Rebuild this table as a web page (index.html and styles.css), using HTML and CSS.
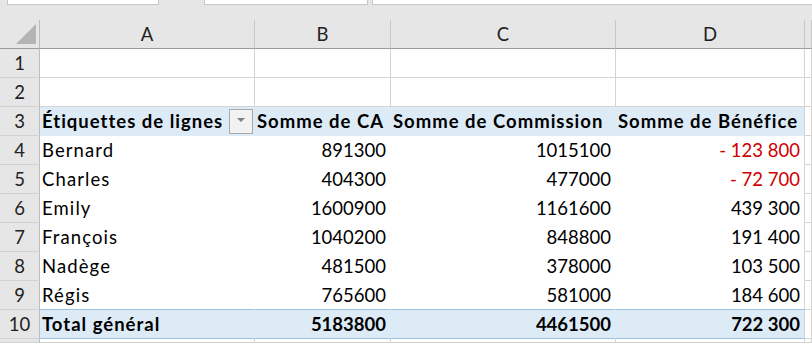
FILE: index.html
```html
<!DOCTYPE html>
<html lang="fr">
  <head>
    <meta charset="UTF-8" />
    <title>Tableau croisé dynamique</title>
    <link rel="stylesheet" href="styles.css">
  </head>
  <body>
    <div class="topbar">
      <span class="box box_name"></span>
      <span class="box box_tools"></span>
      <span class="box box_formula"></span>
    </div>

    <div class="sheet">
      <!-- en-têtes de colonnes -->
      <div class="corner"><span class="corner_tri"></span></div>
      <div class="colhead">A</div>
      <div class="colhead">B</div>
      <div class="colhead">C</div>
      <div class="colhead">D</div>
      <div class="colhead"></div>

      <div class="rowhead">1</div>
      <div class="cell"></div><div class="cell"></div><div class="cell"></div><div class="cell"></div><div class="cell"></div>

      <div class="rowhead">2</div>
      <div class="cell"></div><div class="cell"></div><div class="cell"></div><div class="cell"></div><div class="cell"></div>

      <!-- tableau croisé -->
      <div class="rowhead">3</div>
      <div class="cell pv_head first label">Étiquettes de lignes<span class="dd"></span></div>
      <div class="cell pv_head label">Somme de CA</div>
      <div class="cell pv_head label">Somme de Commission</div>
      <div class="cell pv_head label last">Somme de Bénéfice</div>
      <div class="cell"></div>

      <div class="rowhead">4</div>
      <div class="cell pv first label">Bernard</div>
      <div class="cell pv num">891300</div>
      <div class="cell pv num">1015100</div>
      <div class="cell pv num last neg">- 123 800</div>
      <div class="cell"></div>

      <div class="rowhead">5</div>
      <div class="cell pv first label">Charles</div>
      <div class="cell pv num">404300</div>
      <div class="cell pv num">477000</div>
      <div class="cell pv num last neg">- 72 700</div>
      <div class="cell"></div>

      <div class="rowhead">6</div>
      <div class="cell pv first label">Emily</div>
      <div class="cell pv num">1600900</div>
      <div class="cell pv num">1161600</div>
      <div class="cell pv num last">439 300</div>
      <div class="cell"></div>

      <div class="rowhead">7</div>
      <div class="cell pv first label">François</div>
      <div class="cell pv num">1040200</div>
      <div class="cell pv num">848800</div>
      <div class="cell pv num last">191 400</div>
      <div class="cell"></div>

      <div class="rowhead">8</div>
      <div class="cell pv first label">Nadège</div>
      <div class="cell pv num">481500</div>
      <div class="cell pv num">378000</div>
      <div class="cell pv num last">103 500</div>
      <div class="cell"></div>

      <div class="rowhead">9</div>
      <div class="cell pv pv_end first label">Régis</div>
      <div class="cell pv pv_end num">765600</div>
      <div class="cell pv pv_end num">581000</div>
      <div class="cell pv pv_end num last">184 600</div>
      <div class="cell"></div>

      <div class="rowhead">10</div>
      <div class="cell pv_total first label">Total général</div>
      <div class="cell pv_total num">5183800</div>
      <div class="cell pv_total num">4461500</div>
      <div class="cell pv_total num last">722 300</div>
      <div class="cell"></div>

      <div class="rowhead"></div>
      <div class="cell"></div><div class="cell"></div><div class="cell"></div><div class="cell"></div><div class="cell"></div>
    </div>
  </body>
</html>
```

FILE: styles.css
```css
* {
  margin: 0;
  padding: 0;
  box-sizing: border-box;
}
html,
body {
  width: 812px;
  height: 343px;
  overflow: hidden;
}
body {
  font-family: Lato, "Liberation Sans", sans-serif;
  font-size: 18.5px;
  color: #000;
  background: #e6e6e6;
}

/* barre du haut (zone nom / formule) */
.topbar {
  height: 20px;
  display: flex;
  align-items: flex-start;
}
.box {
  display: block;
  height: 5px;
  background: #fff;
  border: 1px solid #c6c6c6;
  border-top: 0;
}
.box_name {
  margin-left: 7px;
  width: 152px;
}
.box_tools {
  margin-left: 45px;
  width: 164px;
}
.box_formula {
  margin-left: 4px;
  flex: 1;
  border-right: 0;
}

/* grille */
.sheet {
  display: grid;
  grid-template-columns: 40px 215px 136px 225px 189px 1fr;
  grid-template-rows: repeat(11, 29px) 1fr;
  height: 323px;
}
.corner,
.colhead,
.rowhead {
  background: #e6e6e6;
  color: #222;
}
.corner {
  border-right: 1px solid #bdbdbd;
  border-bottom: 1px solid #9b9b9b;
  display: flex;
  justify-content: flex-end;
  align-items: flex-end;
  padding: 0 3px 4px 0;
}
.corner_tri {
  width: 20px;
  height: 20px;
  background: #b4b4b4;
  clip-path: polygon(100% 0, 100% 100%, 0 100%);
}
.colhead {
  border-right: 1px solid #c8c8c8;
  border-bottom: 1px solid #9b9b9b;
  text-align: center;
  line-height: 28px;
}
.rowhead {
  border-right: 1px solid #bdbdbd;
  border-bottom: 1px solid #d2d2d2;
  text-align: center;
  line-height: 28px;
}
.cell {
  background: #fff;
  border-right: 1px solid #d4d4d4;
  border-bottom: 1px solid #d4d4d4;
  line-height: 28px;
  padding: 0 2px;
  white-space: nowrap;
  overflow: hidden;
}

/* styles du tableau croisé */
.pv {
  border-color: #fff;
}
.pv_end {
  border-bottom-color: #9bc2e6;
}
.pv_head,
.pv_total {
  background: #ddebf7;
  border-color: #ddebf7;
  font-weight: bold;
}
.pv_total {
  border-bottom-color: #9bc2e6;
}
.cell.last {
  border-right-color: #d4d4d4;
}
.label {
  letter-spacing: 1.1px;
}
.pv_head.label,
.pv_total.label {
  letter-spacing: 1px;
}
.first {
  display: flex;
  align-items: center;
  justify-content: space-between;
  padding-right: 0;
}
.num {
  text-align: right;
  padding-right: 4px;
}
.neg {
  color: #d00000;
}

/* bouton filtre */
.dd {
  width: 24px;
  height: 25px;
  margin-right: 1px;
  border: 1px solid #a9a9a9;
  background: #f2f2f2;
  display: flex;
  align-items: center;
  justify-content: center;
}
.dd::after {
  content: "";
  border-left: 4px solid transparent;
  border-right: 4px solid transparent;
  border-top: 4px solid #7f7f7f;
  margin-top: -2px;
}
```
